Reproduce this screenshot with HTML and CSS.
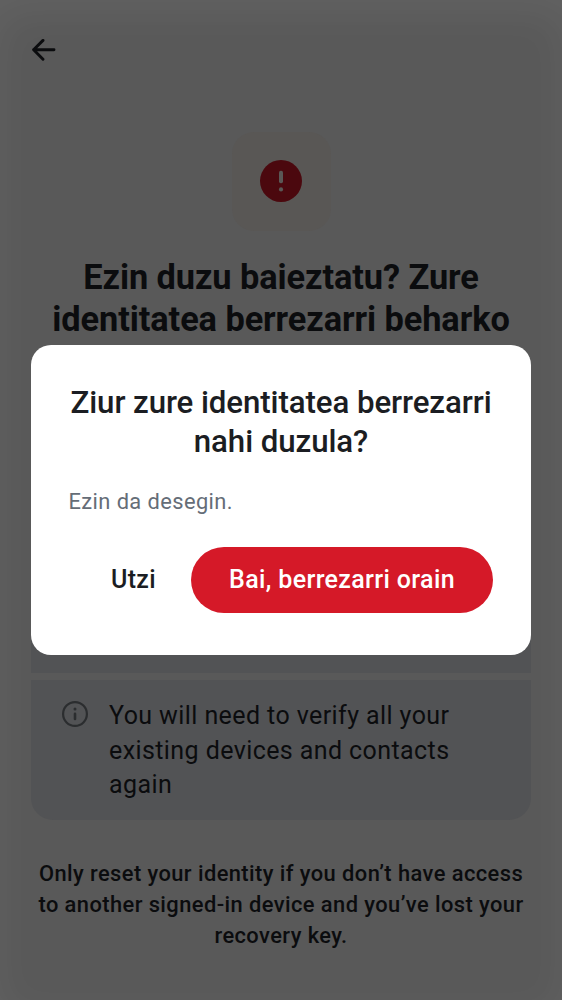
FILE: index.html
```html
<!DOCTYPE html>
<html lang="eu">
<head>
<meta charset="utf-8">
<title>Berrezarri identitatea</title>
<link rel="stylesheet" href="styles.css">
</head>
<body>
<div class="screen">
  <header class="topbar">
    <svg class="back" viewBox="0 0 24 22" fill="none" stroke="#0b0c0e" stroke-width="2.9" stroke-linecap="round" stroke-linejoin="round"><path d="M11 1.4 1.6 10.8l9.4 9.4M1.6 10.8h20.4"/></svg>
  </header>
  <main class="content">
    <div class="hero">
      <svg class="alert" viewBox="0 0 42 42"><circle cx="21" cy="21" r="21" fill="#4b080e"/><rect x="19" y="10.7" width="4" height="12.6" rx="1.7" fill="#5a5856"/><circle cx="21" cy="29.4" r="2.1" fill="#5a5856"/></svg>
    </div>
    <h1 class="heading">Ezin duzu baieztatu? Zure identitatea berrezarri beharko duzu</h1>
    <ul class="list">
      <li class="item"></li>
      <li class="item">
        <svg class="info" viewBox="0 0 26 26" fill="none" stroke="#2b2d2f"><circle cx="13" cy="13" r="11.9" stroke-width="2.2"/><path d="M13 12.9v5" stroke-width="2.6" stroke-linecap="round"/><circle cx="13" cy="8" r="1.5" fill="#2b2d2f" stroke="none"/></svg>
        <span class="item-text">You will need to verify all your existing devices and contacts again</span>
      </li>
    </ul>
    <p class="note">Only reset your identity if you don’t have access to another signed-in device and you’ve lost your recovery key.</p>
  </main>
  <div class="overlay">
    <section class="dialog" role="dialog">
      <h2 class="dialog-title">Ziur zure identitatea berrezarri nahi duzula?</h2>
      <p class="dialog-body">Ezin da desegin.</p>
      <div class="actions">
        <button class="btn btn-text">Utzi</button>
        <button class="btn btn-danger">Bai, berrezarri orain</button>
      </div>
    </section>
  </div>
</div>
</body>
</html>
```
FILE: styles.css
```css
* { box-sizing: border-box; margin: 0; padding: 0; }
body { font-family: Roboto, sans-serif; color: #0b0c0e; background: #595959; }
.screen { position: relative; height: 1000px; overflow: hidden; background: #595959; }
.topbar { height: 100px; padding: 39px 0 0 32px; }
.back { display: block; width: 24px; height: 22px; }
.content { padding: 32px 31px 0; display: flex; flex-direction: column; align-items: center; }
.hero { width: 99px; height: 99px; padding-bottom: 1px; border-radius: 22px; background: #595755; display: flex; align-items: center; justify-content: center; }
.alert { width: 42px; height: 42px; }
.heading { margin-top: 25px; width: 470px; height: 126px; text-align: center; font-weight: 700; font-size: 34.375px; line-height: 42.2px; letter-spacing: -0.08px; }
.list { list-style: none; width: 500px; margin-top: 148px; display: flex; flex-direction: column; gap: 7px; }
.item { display: flex; gap: 21px; padding: 18px 30px 18px 31px; background: #525355; height: 140px; }
.item:first-child { margin-top: 3px; }
.item:last-child { border-radius: 0 0 22px 22px; }
.info { flex: none; width: 26px; height: 26px; margin-top: 3px; }
.item-text { padding-top: 1.2px; font-size: 25px; line-height: 34.4px; letter-spacing: 0.41px; }
.note { margin-top: 38px; width: 500px; text-align: center; font-weight: 500; font-size: 21.875px; line-height: 31px; letter-spacing: 0.43px; }
.overlay { position: absolute; inset: 0; display: flex; align-items: center; justify-content: center; box-shadow: inset 0 14px 40px rgba(255, 255, 255, 0.055); }
.dialog { width: 500px; height: 310px; border-radius: 20px; background: #fff; padding: 38px 37.5px; }
.dialog-title { text-align: center; font-weight: 500; font-size: 31.25px; line-height: 39px; letter-spacing: -0.09px; color: #1b1d22; }
.dialog-body { margin-top: 25px; font-size: 21.875px; line-height: 31.25px; letter-spacing: 0.41px; color: #656d77; }
.actions { display: flex; justify-content: flex-end; margin: 29.75px 0.5px 0 0; }
.btn { height: 65.5px; border: 0; border-radius: 33px; font: 500 25px Roboto, sans-serif; letter-spacing: 0.36px; background: none; padding-bottom: 0.6px; }
.btn-text { color: #1b1d22; padding: 0 35px 0.6px; }
.btn-danger { color: #fff; background: #d51928; width: 302px; }
```
